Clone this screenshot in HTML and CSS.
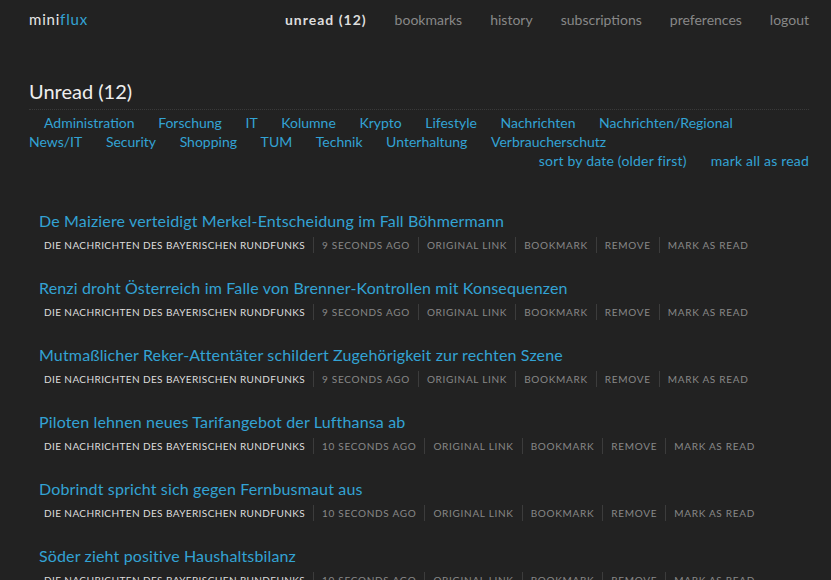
FILE: index.html
```html
<!DOCTYPE html>
<html>
<head>
<meta charset="utf-8">
<link rel="stylesheet" href="styles.css">
</head>
<body>
<header class="header">
  <div class="logo">mini<span class="logo-flux">flux</span></div>
  <nav class="nav">
    <a class="nav-item active">unread (12)</a>
    <a class="nav-item">bookmarks</a>
    <a class="nav-item">history</a>
    <a class="nav-item">subscriptions</a>
    <a class="nav-item">preferences</a>
    <a class="nav-item">logout</a>
  </nav>
</header>
<section class="page-header">
  <h2 class="page-title">Unread (12)</h2>
  <ul class="categories">
    <li><a>Administration</a></li>
    <li><a>Forschung</a></li>
    <li><a>IT</a></li>
    <li><a>Kolumne</a></li>
    <li><a>Krypto</a></li>
    <li><a>Lifestyle</a></li>
    <li><a>Nachrichten</a></li>
    <li><a>Nachrichten/Regional</a></li>
    <li><a>News/IT</a></li>
    <li><a>Security</a></li>
    <li><a>Shopping</a></li>
    <li><a>TUM</a></li>
    <li><a>Technik</a></li>
    <li><a>Unterhaltung</a></li>
    <li><a>Verbraucherschutz</a></li>
  </ul>
  <div class="actions">
    <a>sort by date (older first)</a>
    <a>mark all as read</a>
  </div>
</section>
<section class="items">
  <article class="item">
    <h2 class="item-title"><a>De Maiziere verteidigt Merkel-Entscheidung im Fall Böhmermann</a></h2>
    <ul class="meta"><li class="source">Die Nachrichten des Bayerischen Rundfunks</li><li>9 seconds ago</li><li>original link</li><li>bookmark</li><li>remove</li><li>mark as read</li></ul>
  </article>
  <article class="item">
    <h2 class="item-title"><a>Renzi droht Österreich im Falle von Brenner-Kontrollen mit Konsequenzen</a></h2>
    <ul class="meta"><li class="source">Die Nachrichten des Bayerischen Rundfunks</li><li>9 seconds ago</li><li>original link</li><li>bookmark</li><li>remove</li><li>mark as read</li></ul>
  </article>
  <article class="item">
    <h2 class="item-title"><a>Mutmaßlicher Reker-Attentäter schildert Zugehörigkeit zur rechten Szene</a></h2>
    <ul class="meta"><li class="source">Die Nachrichten des Bayerischen Rundfunks</li><li>9 seconds ago</li><li>original link</li><li>bookmark</li><li>remove</li><li>mark as read</li></ul>
  </article>
  <article class="item">
    <h2 class="item-title"><a>Piloten lehnen neues Tarifangebot der Lufthansa ab</a></h2>
    <ul class="meta"><li class="source">Die Nachrichten des Bayerischen Rundfunks</li><li>10 seconds ago</li><li>original link</li><li>bookmark</li><li>remove</li><li>mark as read</li></ul>
  </article>
  <article class="item">
    <h2 class="item-title"><a>Dobrindt spricht sich gegen Fernbusmaut aus</a></h2>
    <ul class="meta"><li class="source">Die Nachrichten des Bayerischen Rundfunks</li><li>10 seconds ago</li><li>original link</li><li>bookmark</li><li>remove</li><li>mark as read</li></ul>
  </article>
  <article class="item">
    <h2 class="item-title"><a>Söder zieht positive Haushaltsbilanz</a></h2>
    <ul class="meta"><li class="source">Die Nachrichten des Bayerischen Rundfunks</li><li>10 seconds ago</li><li>original link</li><li>bookmark</li><li>remove</li><li>mark as read</li></ul>
  </article>
</section>
</body>
</html>
```
FILE: styles.css
```css
html, body {
  margin: 0;
  padding: 0;
  background: #222222;
  color: #cccccc;
  font-family: "Lato", "Open Sans", sans-serif;
  overflow: hidden;
}
body {
  padding: 0 22px 0 29px;
}
a {
  color: #33a3d4;
  text-decoration: none;
  cursor: pointer;
}
.header {
  display: flex;
  justify-content: space-between;
  align-items: center;
  height: 38px;
}
.logo {
  font-size: 15px;
  color: #e6e6e6;
  letter-spacing: 0.8px;
}
.logo-flux {
  color: #33a3d4;
}
.nav {
  display: flex;
  gap: 28px;
  font-size: 14px;
}
.nav-item {
  color: #888888;
}
.nav-item.active {
  color: #dddddd;
  font-weight: bold;
  letter-spacing: 1px;
}
.page-header {
  margin-top: 39px;
}
.page-title {
  margin: 0;
  font-size: 20px;
  font-weight: normal;
  color: #eeeeee;
  line-height: 28px;
  padding-bottom: 4px;
  border-bottom: 1px dotted #3a3a3a;
}
.categories {
  list-style: none;
  margin: 3px 0 0 0;
  padding: 0;
  max-width: 740px;
  text-indent: 15px;
  font-size: 14px;
  line-height: 19px;
}
.categories li {
  display: inline;
  margin-right: 20px;
}
.actions {
  display: flex;
  justify-content: flex-end;
  gap: 24px;
  font-size: 14px;
  line-height: 19px;
  letter-spacing: 0.2px;
}
.items {
  margin-top: 40px;
  padding-left: 10px;
}
.item {
  height: 67px;
}
.item-title {
  margin: 0;
  font-size: 16px;
  font-weight: normal;
  line-height: 22px;
  letter-spacing: 0.15px;
}
.meta {
  list-style: none;
  display: flex;
  margin: 5px 0 0 0;
  padding: 0 0 0 5px;
  font-size: 10px;
  line-height: 16px;
  text-transform: uppercase;
  letter-spacing: 0.7px;
  color: #888888;
  white-space: nowrap;
}
.meta li {
  padding: 0 8px;
  border-left: 1px solid #3c3c3c;
}
.meta li.source {
  padding-left: 0;
  border-left: none;
  color: #dddddd;
  letter-spacing: 0.4px;
}
```
